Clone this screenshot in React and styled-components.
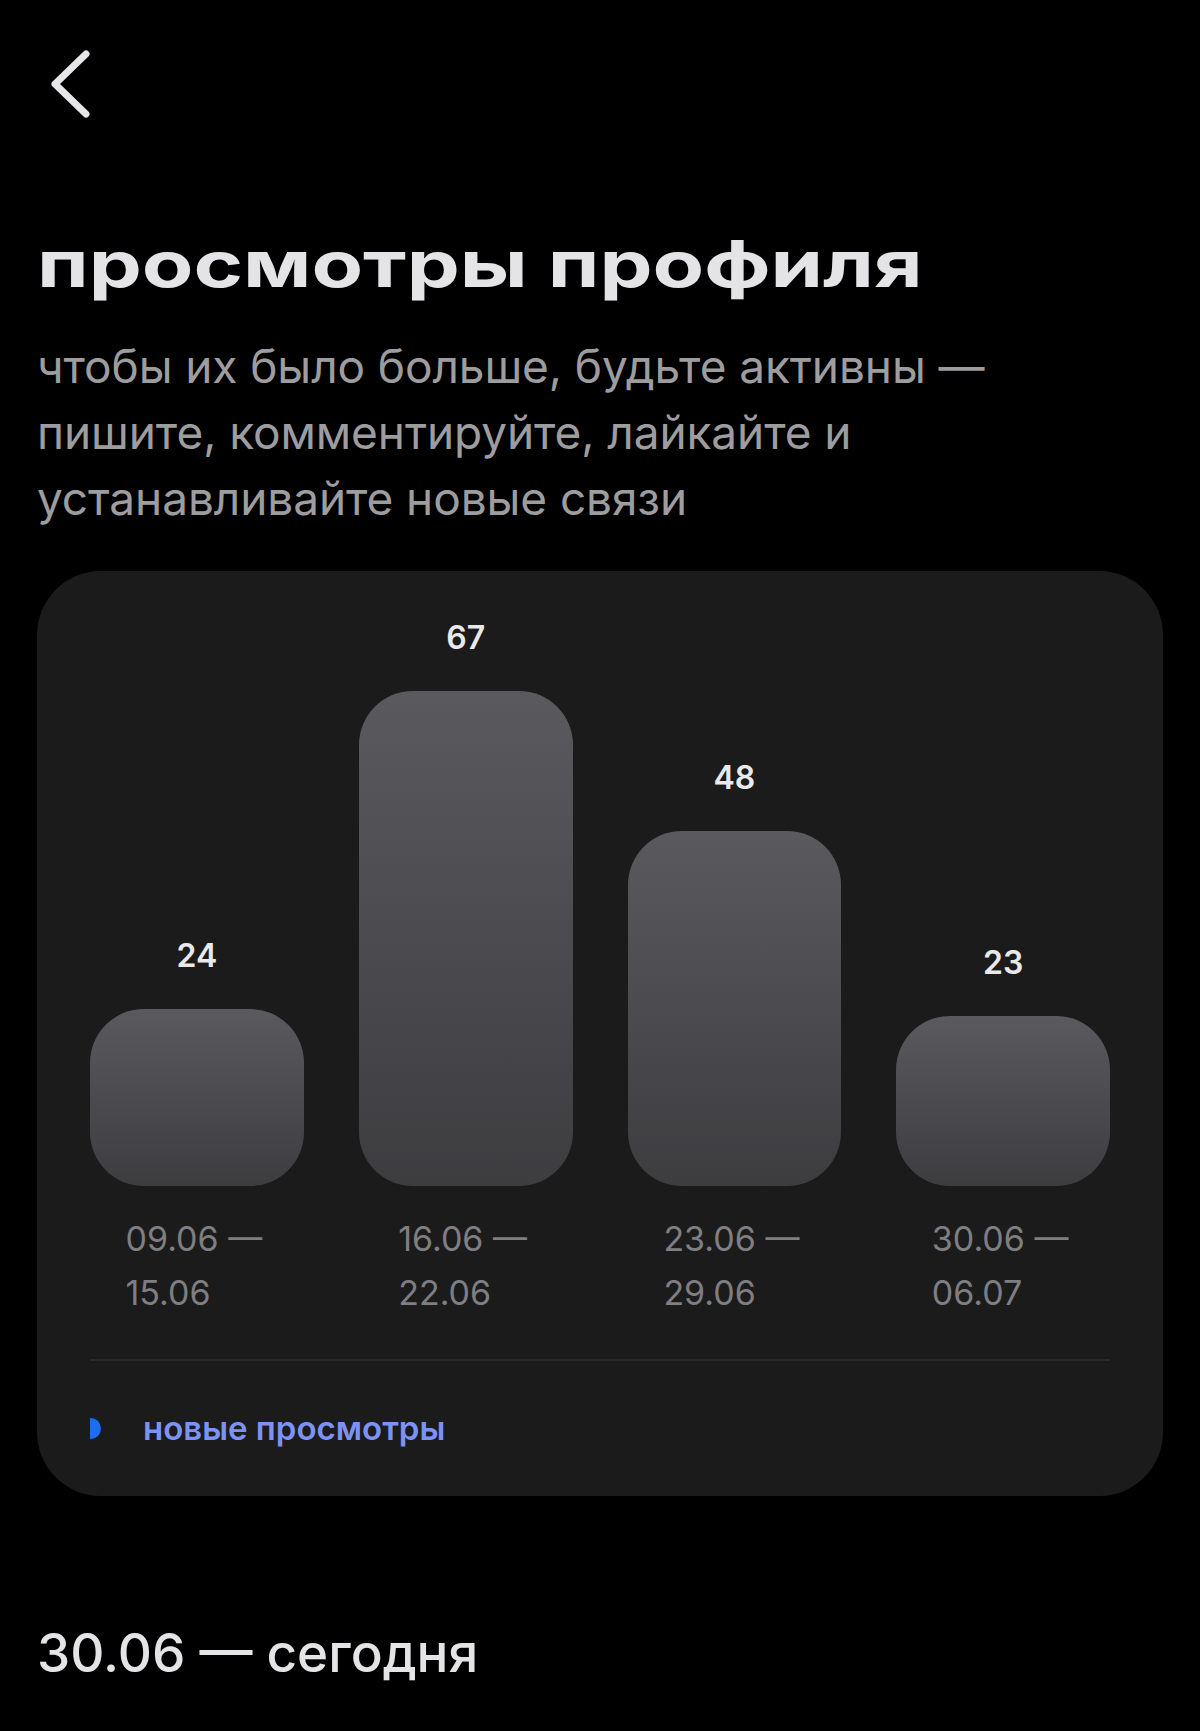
import React, { useLayoutEffect, useRef, useState } from 'react';
import styled, { createGlobalStyle } from 'styled-components';

const GlobalStyle = createGlobalStyle`
  html, body { margin: 0; padding: 0; background: #000; }
  body {
    font-family: Inter, "Noto Sans", sans-serif;
    -webkit-font-smoothing: antialiased;
  }
  * { box-sizing: border-box; }
`;

const Page = styled.main`
  min-height: 1731px;
  background: #000;
  padding: 40px 37px 0;
  display: flex;
  flex-direction: column;
  font-family: Inter, "Noto Sans", sans-serif;
`;

const BackButton = styled.button`
  width: 64px;
  height: 90px;
  padding: 0;
  margin: 0;
  border: 0;
  background: none;
  cursor: pointer;
  svg { display: block; }
`;

const Title = styled.h1`
  margin: 102px 0 0;
  font-weight: 700;
  font-size: 64px;
  line-height: 64px;
  color: #e4e4e6;
  white-space: nowrap;
`;

const TitleText = styled.span`
  display: inline-block;
  transform-origin: left center;
`;

const Lead = styled.p`
  margin: 37px 0 0;
  font-weight: 400;
  font-size: 46px;
  line-height: 66px;
  letter-spacing: -0.1px;
  color: #9d9d9f;
  white-space: nowrap;
`;

const Card = styled.section`
  margin-top: 40px;
  background: #1b1b1b;
  border-radius: 64px;
  padding: 47px 53px 48px;
`;

const Chart = styled.div`
  display: grid;
  grid-template-columns: repeat(4, 1fr);
  column-gap: 55px;
  align-items: end;
`;

const Column = styled.div`
  display: flex;
  flex-direction: column;
`;

const Value = styled.div`
  font-weight: 600;
  font-size: 32px;
  line-height: 40px;
  color: #e9e9eb;
  text-align: center;
  margin-bottom: 33px;
`;

const Bar = styled.div`
  height: ${(p) => p.$h}px;
  border-radius: 54px;
  background: linear-gradient(180deg, #5a5a5e 0%, #3d3d40 100%);
`;

const Period = styled.div`
  margin: 26px auto 0;
  width: fit-content;
  font-weight: 400;
  font-size: 34px;
  line-height: 54px;
  color: #7e7e83;
  white-space: nowrap;
  transform: translateX(-3px);
`;

const Divider = styled.hr`
  margin: 39px 0 0;
  border: 0;
  height: 2px;
  background: #2b2b2b;
`;

const Legend = styled.div`
  display: flex;
  align-items: center;
  gap: 42px;
  margin-top: 47px;
  height: 40px;
`;

const LegendMark = styled.span`
  width: 11px;
  height: 21px;
  border-radius: 0 11px 11px 0;
  background: #1e6cf3;
`;

const LegendText = styled.span`
  font-weight: 600;
  font-size: 33px;
  line-height: 40px;
  color: #7c93f5;
`;

const SectionTitle = styled.h2`
  margin: 124px 0 0;
  font-weight: 500;
  font-size: 53px;
  line-height: 66px;
  color: #e4e4e6;
`;

const data = [
  { value: 24, from: '09.06', to: '15.06' },
  { value: 67, from: '16.06', to: '22.06' },
  { value: 48, from: '23.06', to: '29.06' },
  { value: 23, from: '30.06', to: '06.07' },
];

const MAX_BAR = 495;

function WideTitle({ children, target }) {
  const ref = useRef(null);
  const [scale, setScale] = useState(1.38);
  useLayoutEffect(() => {
    if (ref.current) {
      const w = ref.current.offsetWidth;
      if (w) setScale(target / w);
    }
  }, [target]);
  return (
    <TitleText ref={ref} style={{ transform: `scaleX(${scale})` }}>
      {children}
    </TitleText>
  );
}

export default function App() {
  const max = Math.max(...data.map((d) => d.value));
  return (
    <>
      <GlobalStyle />
      <Page>
        <BackButton aria-label="назад">
          <svg width="64" height="90" viewBox="0 0 64 90" fill="none">
            <path
              d="M49 14 L18 44 L49 74"
              stroke="#e6e6e8"
              strokeWidth="7"
              strokeLinecap="round"
              strokeLinejoin="round"
            />
          </svg>
        </BackButton>
        <Title>
          <WideTitle target={886}>просмотры профиля</WideTitle>
        </Title>
        <Lead>
          чтобы их было больше, будьте активны —<br />
          пишите, комментируйте, лайкайте и<br />
          устанавливайте новые связи
        </Lead>
        <Card>
          <Chart>
            {data.map((d) => (
              <Column key={d.from}>
                <Value>{d.value}</Value>
                <Bar $h={Math.round((d.value / max) * MAX_BAR)} />
                <Period>
                  {d.from} —<br />
                  {d.to}
                </Period>
              </Column>
            ))}
          </Chart>
          <Divider />
          <Legend>
            <LegendMark />
            <LegendText>новые просмотры</LegendText>
          </Legend>
        </Card>
        <SectionTitle>30.06 — сегодня</SectionTitle>
      </Page>
    </>
  );
}
